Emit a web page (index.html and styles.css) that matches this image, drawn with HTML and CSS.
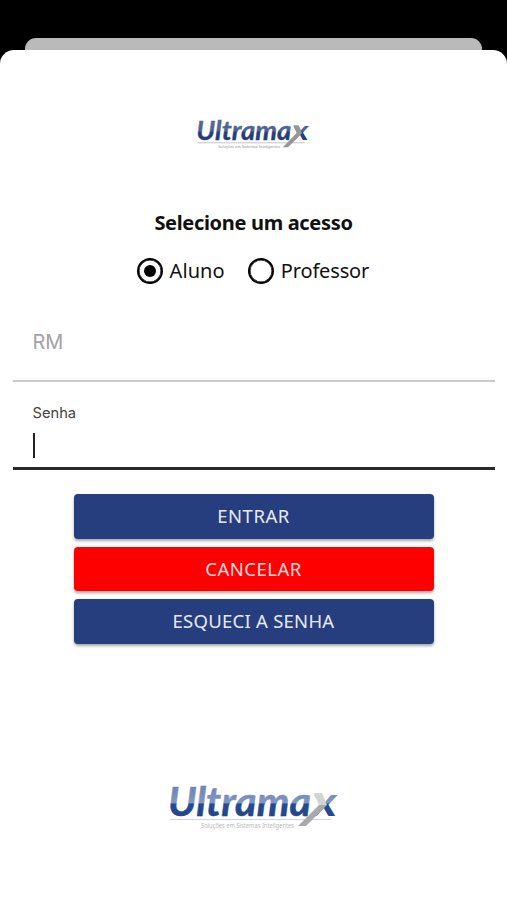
FILE: index.html
```html
<!DOCTYPE html>
<html lang="pt-BR">
<head>
<meta charset="utf-8">
<title>Ultramax</title>
<link rel="stylesheet" href="styles.css">
</head>
<body>
<div class="backdrop"></div>
<main class="sheet">
  <svg class="logo logo-small" viewBox="0 0 170 46">
    <defs>
      <linearGradient id="ink" gradientUnits="userSpaceOnUse" x1="0" y1="0" x2="0" y2="34">
        <stop offset="0" stop-color="#566994"/><stop offset=".5" stop-color="#4d6394"/><stop offset=".6" stop-color="#233d79"/><stop offset="1" stop-color="#283f77"/>
      </linearGradient>
    </defs>
    <path d="M1 35.5H162" stroke="#c5c5c8" stroke-width="1.5"/>
    <text class="brand" x="-1" y="32" textLength="143" lengthAdjust="spacingAndGlyphs" fill="url(#ink)" stroke="url(#ink)">Ultrama</text>
    <text class="brand" x="143" y="32" textLength="25" lengthAdjust="spacingAndGlyphs" fill="url(#ink)">x</text>
    <path d="M145 9h8l5 12-21 21h-8l21-21z" fill="#969699"/>
    <text class="tagline" x="32" y="43.5" textLength="93" lengthAdjust="spacingAndGlyphs" fill="#929296">Soluções em Sistemas Inteligentes</text>
  </svg>
  <h1>Selecione um acesso</h1>
  <div class="options">
    <div class="option"><span class="radio checked"></span><span class="aluno">Aluno</span></div>
    <div class="option"><span class="radio"></span><span class="professor">Professor</span></div>
  </div>
  <div class="field rm"><span>RM</span></div>
  <div class="field senha"><span>Senha</span><i class="caret"></i></div>
  <div class="actions">
    <button><span class="entrar">ENTRAR</span></button>
    <button class="danger"><span class="cancelar">CANCELAR</span></button>
    <button><span class="esqueci">ESQUECI A SENHA</span></button>
  </div>
  <svg class="logo logo-large" viewBox="0 0 170 46">
    <defs>
      <linearGradient id="blue" gradientUnits="userSpaceOnUse" x1="0" y1="0" x2="0" y2="34">
        <stop offset="0" stop-color="#6b82b3"/><stop offset=".55" stop-color="#8097c3"/><stop offset=".59" stop-color="#234b92"/><stop offset="1" stop-color="#25458b"/>
      </linearGradient>
    </defs>
    <path d="M1 35.5H162" stroke="#d0d4dc"/>
    <text class="brand" x="-1" y="32" textLength="143" lengthAdjust="spacingAndGlyphs" fill="url(#blue)" stroke="url(#blue)">Ultrama</text>
    <text class="brand" x="143" y="32" textLength="25" lengthAdjust="spacingAndGlyphs" fill="url(#blue)">x</text>
    <path d="M145 9h8l5 12h-8z" fill="#d3d3d3"/>
    <path d="M150 21h8l-21 21h-8z" fill="#a9a9ab"/>
    <text class="tagline" x="32" y="43.5" textLength="93" lengthAdjust="spacingAndGlyphs" fill="#b9b9bd">Soluções em Sistemas Inteligentes</text>
  </svg>
</main>
</body>
</html>
```
FILE: styles.css
```css
* { box-sizing: border-box; }
body {
  margin: 0;
  height: 900px;
  padding-top: 38px;
  overflow: hidden;
  background: #000;
  color: #111;
  font-family: "Noto Sans", sans-serif;
}
.backdrop {
  height: 12px;
  margin: 0 25px;
  border-radius: 11px 11px 0 0;
  background: #bababa;
}
.sheet {
  height: 850px;
  display: flex;
  flex-direction: column;
  align-items: center;
  border-radius: 14px 14px 0 0;
  background: #fff;
}
.logo { display: block; flex: none; overflow: visible; }
.logo-small { width: 113px; height: 31px; margin-top: 69px; }
.logo-large { width: 170px; height: 46px; margin-top: 140px; }
.brand { font: italic 700 41px Lato, sans-serif; stroke-width: .5px; }
.tagline { font: 6.5px "Noto Sans", sans-serif; }
h1 {
  margin: 58px 0 0;
  font-size: 20px;
  line-height: 30px;
  font-weight: 700;
  letter-spacing: -.32px;
  white-space: nowrap;
}
.options {
  width: 234px;
  height: 28px;
  margin-top: 19px;
  display: flex;
  gap: 23px;
}
.option {
  display: flex;
  align-items: center;
  gap: 7px;
  font-size: 20px;
  line-height: 28px;
  white-space: nowrap;
}
.aluno { letter-spacing: .1px; }
.professor { letter-spacing: -.15px; }
.radio {
  width: 26px;
  height: 26px;
  flex: none;
  display: grid;
  place-items: center;
  border: 2.5px solid #000;
  border-radius: 50%;
  box-shadow: inset 0 0 0 .5px #000;
}
.checked::after {
  content: "";
  width: 12px;
  height: 12px;
  border-radius: 50%;
  background: #000;
}
.field { width: 482px; padding-left: 20px; font-family: Inter, sans-serif; }
.rm {
  height: 63px;
  margin-top: 34px;
  padding-top: 8px;
  border-bottom: 2px solid #cbcbcb;
  color: #a3a3a3;
  font-size: 20px;
  line-height: 30px;
}
.senha {
  height: 88px;
  padding-top: 20px;
  border-bottom: 3px solid #29292b;
  color: #444;
  font-size: 14.7px;
  line-height: 22px;
}
.senha span { display: block; }
.caret { display: block; width: 2.5px; height: 25px; margin-top: 9px; background: #222; }
.actions { width: 360px; display: grid; gap: 8px; margin-top: 24px; }
button {
  height: 44.7px;
  padding: 0 0 1px;
  border: 0;
  border-radius: 4px;
  background: #263d7e;
  box-shadow: 0 2px 3px rgba(0, 0, 0, .35);
  color: #e6ebfc;
  font: 400 18.5px/42px "Noto Sans", sans-serif;
}
.entrar, .cancelar { letter-spacing: .5px; }
.esqueci { letter-spacing: .25px; }
.danger { background: #f00; color: #ffdada; }
```
